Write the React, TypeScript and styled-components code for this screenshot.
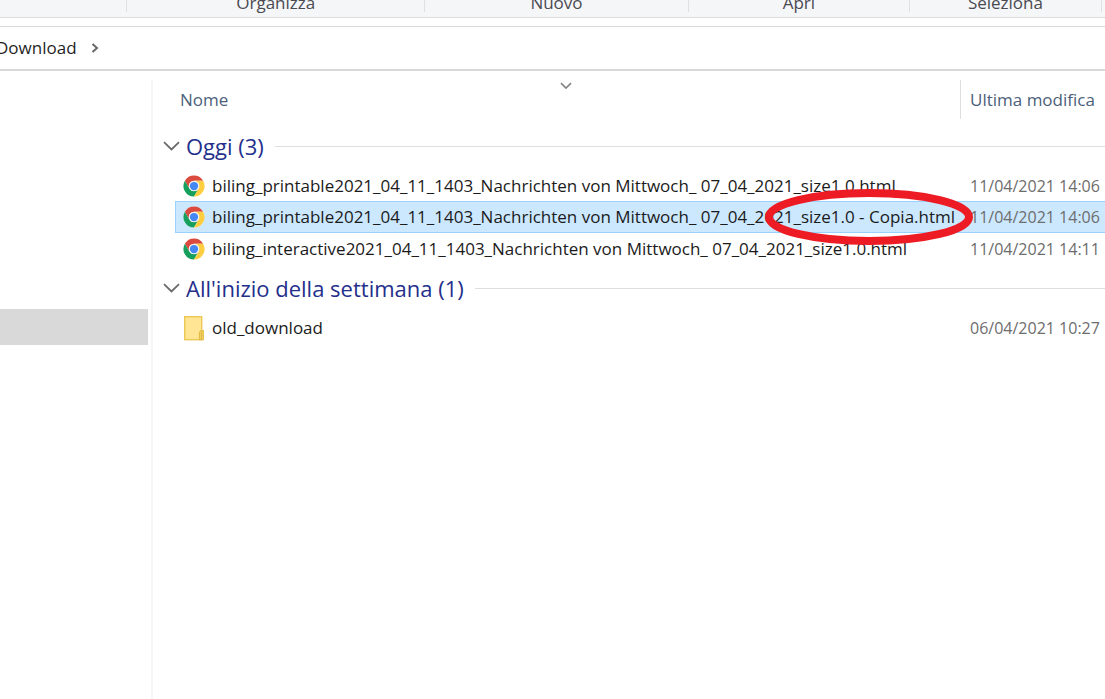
import React from "react";
import styled, { createGlobalStyle, css } from "styled-components";

const GlobalStyle = createGlobalStyle`
  *, *::before, *::after { box-sizing: border-box; }
  html, body, #root { height: 100%; }
  body {
    margin: 0;
    background: #fff;
    color: #1b1b1b;
    font-family: "Open Sans", "Noto Sans", sans-serif;
    font-size: 17px;
    line-height: 24px;
    overflow: hidden;
  }
  button {
    font: inherit;
    color: inherit;
    background: none;
    border: 0;
    padding: 0;
    cursor: pointer;
  }
`;

const Window = styled.div`
  display: flex;
  flex-direction: column;
  min-height: 100vh;
`;

const Ribbon = styled.div`
  display: flex;
  align-items: flex-end;
  height: 18px;
  padding-bottom: 5px;
  overflow: hidden;
  background: #f5f6f8;
  border-bottom: 1px solid #dcdddf;
`;

const RibbonGroup = styled.div<{ $share: number }>`
  flex: ${(p) => p.$share} 1 0;
  height: 24px;
  line-height: 30px;
  border-right: 1px solid #dfe0e2;
  text-align: center;
  color: #4a4a52;

  &:last-child {
    border-right: 0;
  }
`;

const AddressBar = styled.nav`
  display: flex;
  align-items: center;
  gap: 14px;
  height: 45px;
  margin-top: 8px;
  border-top: 1px solid #dadada;
  border-bottom: 2px solid #d9d9d9;
`;

const Crumb = styled.a`
  margin-left: -4px;
  color: #1f1f1f;
  text-decoration: none;
`;

const Body = styled.div`
  display: flex;
  flex: 1;
  padding-top: 9px;
`;

const Sidebar = styled.aside`
  flex: none;
  width: 153px;
  padding: 229px 3px 0 0;
  border-right: 2px solid #f5f5f5;
`;

const SidebarSelection = styled.div`
  height: 36px;
  background: #d9d9d9;
`;

const Main = styled.main`
  flex: 1;
  min-width: 0;
`;

const FileTable = styled.table`
  width: 100%;
  table-layout: fixed;
  border-collapse: separate;
  border-spacing: 0;
  white-space: nowrap;

  td, th {
    padding: 0;
    font-weight: 400;
    text-align: left;
  }
`;

const GutterCol = styled.col`
  width: 22px;
`;

const DateCol = styled.col`
  width: 145px;
`;

const HeadCell = styled.th`
  position: relative;
  height: 42px;
  vertical-align: top;
`;

const HeadButton = styled.button<{ $divided?: boolean }>`
  display: block;
  width: 100%;
  height: 39px;
  padding-left: ${(p) => (p.$divided ? 9 : 5)}px;
  border-left: ${(p) => (p.$divided ? "1px solid #dedede" : "0")};
  text-align: left;
  color: #4c607a;
`;

const SortMark = styled.svg`
  position: absolute;
  top: 2px;
  left: 50%;
  margin-left: -8px;
`;

const GroupBar = styled.div`
  display: flex;
  align-items: center;
  gap: 11px;
  height: 48px;
  padding-left: 10px;

  &::after {
    content: "";
    flex: 1;
    height: 1px;
    background: #dedede;
  }
`;

const GroupButton = styled.button`
  display: flex;
  align-items: center;
  gap: 6px;
  font-size: 22px;
  line-height: 28px;
  color: #242f8c;
`;

const Row = styled.tr<{ $selected?: boolean }>`
  height: 31px;

  ${(p) =>
    p.$selected &&
    css`
      height: 32px;

      td + td {
        background: #cce8ff;
        border-top: 1px solid #99d1ff;
        border-bottom: 1px solid #99d1ff;
      }
      td:nth-child(2) {
        border-left: 1px solid #99d1ff;
      }
      td:nth-child(2) > div {
        padding-left: 7px;
      }
    `}
`;

const NameBox = styled.div`
  display: flex;
  align-items: center;
  gap: 7px;
  padding-left: 8px;
`;

const DateCell = styled.td`
  && {
    padding-left: 10px;
    font-size: 16px;
    color: #6d6d6d;
  }
`;

const Marked = styled.span`
  position: relative;
`;

const Ring = styled.svg`
  position: absolute;
  z-index: 1;
  top: -16px;
  right: -18px;
  pointer-events: none;
`;

const ChromeIcon = () => (
  <svg width="22" height="22" viewBox="0 0 48 48" aria-hidden="true">
    <circle cx="24" cy="24" r="23" fill="#fff" />
    <path d="M24 1a23 23 0 0 1 19.92 11.5H24A11.5 11.5 0 0 0 14.04 29.75L4.08 12.5A23 23 0 0 1 24 1z" fill="#db4a3f" />
    <path d="M4.08 12.5 14.04 29.75A11.5 11.5 0 0 0 33.96 29.75L24 47A23 23 0 0 1 4.08 12.5z" fill="#17a05d" />
    <path d="M43.92 12.5A23 23 0 0 1 24 47L33.96 29.75A11.5 11.5 0 0 0 24 12.5z" fill="#ffcd40" />
    <circle cx="24" cy="24" r="11" fill="#f1f1f1" />
    <circle cx="24" cy="24" r="9" fill="#4587f4" />
  </svg>
);

const FolderIcon = () => (
  <svg width="22" height="26" viewBox="0 0 22 26" aria-hidden="true">
    <rect x="1.7" y="1.7" width="17" height="23" fill="#ffe594" stroke="#ebc954" strokeWidth="1.4" />
    <path d="M16.5 24.7v-7.2l1.4-1.8h2.4v9z" fill="#f5d56b" stroke="#e3bd45" strokeWidth="1.2" />
    <path d="M18.4 17v7" stroke="#dcb53c" strokeWidth="1" />
  </svg>
);

const GroupChevron = () => (
  <svg width="17" height="10" viewBox="0 0 17 10" fill="none" aria-hidden="true">
    <path d="M1 1.2 8.5 8.4 16 1.2" stroke="#6a6a6a" strokeWidth="1.8" />
  </svg>
);

type FileItem = {
  icon: "chrome" | "folder";
  name: string;
  marked?: string;
  date: string;
  selected?: boolean;
};

const groups: { title: string; files: FileItem[] }[] = [
  {
    title: "Oggi (3)",
    files: [
      {
        icon: "chrome",
        name: "biling_printable2021_04_11_1403_Nachrichten von Mittwoch_ 07_04_2021_size1.0.html",
        date: "11/04/2021 14:06",
      },
      {
        icon: "chrome",
        name: "biling_printable2021_04_11_1403_Nachrichten von Mittwoch_ 07_04_2021",
        marked: "_size1.0 - Copia.html",
        date: "11/04/2021 14:06",
        selected: true,
      },
      {
        icon: "chrome",
        name: "biling_interactive2021_04_11_1403_Nachrichten von Mittwoch_ 07_04_2021_size1.0.html",
        date: "11/04/2021 14:11",
      },
    ],
  },
  {
    title: "All'inizio della settimana (1)",
    files: [{ icon: "folder", name: "old_download", date: "06/04/2021 10:27" }],
  },
];

const ribbonGroups = [
  { label: "", share: 127 },
  { label: "Organizza", share: 298 },
  { label: "Nuovo", share: 264 },
  { label: "Apri", share: 221 },
  { label: "Seleziona", share: 192 },
  { label: "", share: 3 },
];

export default function App() {
  return (
    <>
      <GlobalStyle />
      <Window>
        <Ribbon>
          {ribbonGroups.map((g) => (
            <RibbonGroup key={g.share} $share={g.share}>
              {g.label}
            </RibbonGroup>
          ))}
        </Ribbon>
        <AddressBar>
          <Crumb href="#download">Download</Crumb>
          <svg width="8" height="10" viewBox="0 0 8 10" fill="none" aria-hidden="true">
            <path d="M1.5 1 6 5 1.5 9" stroke="#686868" strokeWidth="2" />
          </svg>
        </AddressBar>
        <Body>
          <Sidebar>
            <SidebarSelection />
          </Sidebar>
          <Main>
            <FileTable>
              <colgroup>
                <GutterCol />
                <col />
                <DateCol />
              </colgroup>
              <thead>
                <tr>
                  <td />
                  <HeadCell scope="col">
                    <HeadButton>Nome</HeadButton>
                    <SortMark width="12" height="8" viewBox="0 0 12 8" fill="none" aria-hidden="true">
                      <path d="M1 1.2 6 6 11 1.2" stroke="#858585" strokeWidth="1.7" />
                    </SortMark>
                  </HeadCell>
                  <HeadCell scope="col">
                    <HeadButton $divided>Ultima modifica</HeadButton>
                  </HeadCell>
                </tr>
              </thead>
              {groups.map((group) => (
                <tbody key={group.title}>
                  <tr>
                    <th colSpan={3} scope="rowgroup">
                      <GroupBar>
                        <GroupButton aria-expanded="true">
                          <GroupChevron />
                          {group.title}
                        </GroupButton>
                      </GroupBar>
                    </th>
                  </tr>
                  {group.files.map((file) => (
                    <Row key={file.name} $selected={file.selected}>
                      <td />
                      <td>
                        <NameBox>
                          {file.icon === "chrome" ? <ChromeIcon /> : <FolderIcon />}
                          <span>
                            {file.name}
                            {file.marked && (
                              <Marked>
                                {file.marked}
                                <Ring width="208" height="56" viewBox="0 0 208 56" fill="none" aria-hidden="true">
                                  <ellipse cx="104" cy="28" rx="100" ry="24" stroke="#ed1c24" strokeWidth="8" />
                                </Ring>
                              </Marked>
                            )}
                          </span>
                        </NameBox>
                      </td>
                      <DateCell>{file.date}</DateCell>
                    </Row>
                  ))}
                </tbody>
              ))}
            </FileTable>
          </Main>
        </Body>
      </Window>
    </>
  );
}
